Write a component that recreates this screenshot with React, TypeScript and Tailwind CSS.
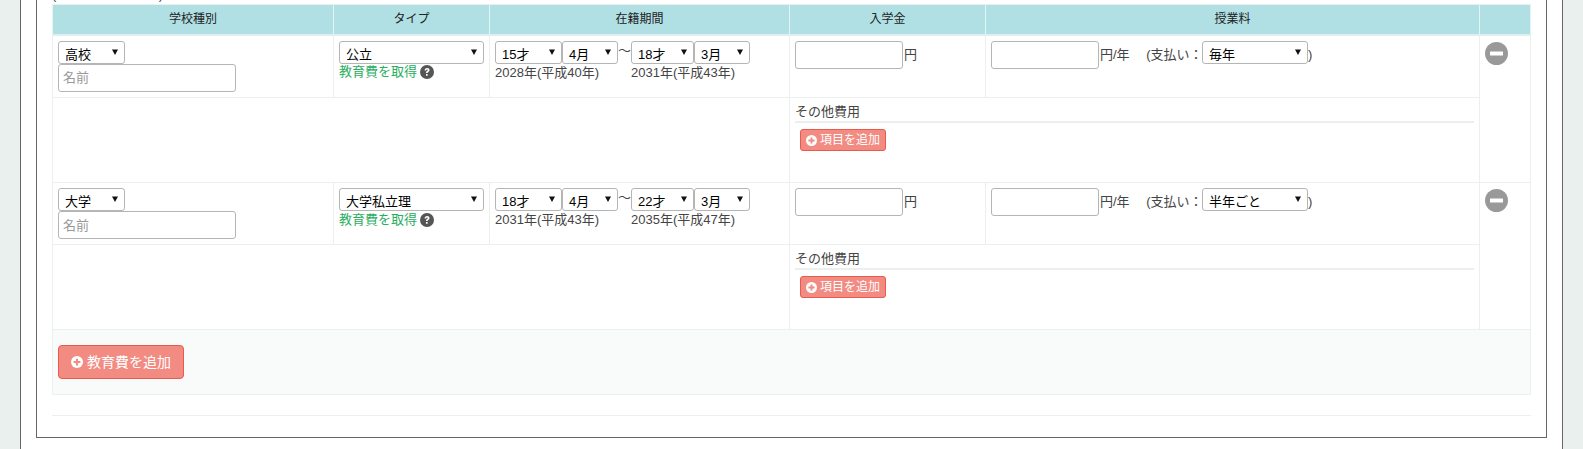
import React from "react";

const font = "font-['Liberation_Sans','Noto_Sans_CJK_JP',sans-serif]";

const Arrow = () => (
  <svg
    viewBox="0 0 6 6"
    className="absolute right-[6px] top-[7px] w-[6px] h-[6px] pointer-events-none"
  >
    <path d="M0 .5h6L3 6z" fill="#111" />
  </svg>
);

const Select = ({ value, w }: { value: string; w: string }) => (
  <div
    className={`relative shrink-0 h-[23px] ${w} bg-white border border-[#b5b5b5] rounded-[3px] text-[13px] text-black pl-[6px] leading-[23px] pt-[1px]`}
  >
    {value}
    <Arrow />
  </div>
);

const PlusIcon = ({ size }: { size: string }) => (
  <svg viewBox="0 0 16 16" className={`${size} shrink-0`}>
    <circle cx="8" cy="8" r="8" fill="#fff" />
    <path d="M3.5 6.6h3.1V3.5h2.8v3.1h3.1v2.8H9.4v3.1H6.6V9.4H3.5z" fill="#f28b82" />
  </svg>
);

const MinusIcon = () => (
  <svg viewBox="0 0 23 23" className="w-[23px] h-[23px]">
    <circle cx="11.5" cy="11.5" r="11.5" fill="#999" />
    <rect x="5" y="9.5" width="13" height="4" rx="0.5" fill="#fff" />
  </svg>
);

const HelpIcon = () => (
  <svg viewBox="0 0 14 14" className="w-[14px] h-[14px] shrink-0">
    <circle cx="7" cy="7" r="7" fill="#555" />
    <path
      d="M4.6 5.4c0-1.5 1-2.4 2.5-2.4s2.4.9 2.4 2.1c0 1-.6 1.5-1.2 1.9-.5.3-.7.5-.7 1H6c0-1 .4-1.5 1-1.9.5-.3.8-.5.8-1 0-.4-.3-.7-.8-.7s-.8.3-.9 1zM6 9h1.6v1.7H6z"
      fill="#fff"
    />
  </svg>
);

type Row = {
  school: string;
  type: string;
  fromAge: string;
  toAge: string;
  fromYear: string;
  toYear: string;
  pay: string;
  height: string;
};

const rows: Row[] = [
  {
    school: "高校",
    type: "公立",
    fromAge: "15才",
    toAge: "18才",
    fromYear: "2028年(平成40年)",
    toYear: "2031年(平成43年)",
    pay: "毎年",
    height: "h-[63px]",
  },
  {
    school: "大学",
    type: "大学私立理",
    fromAge: "18才",
    toAge: "22才",
    fromYear: "2031年(平成43年)",
    toYear: "2035年(平成47年)",
    pay: "半年ごと",
    height: "h-[62px]",
  },
];

const cell = "border border-[#ebf0ee] align-top p-0";
const head =
  "border border-[#ebf0ee] border-x-[#e6f4f5] border-b-[2px] border-b-[#dfeeee] bg-[#b0dfe4] font-normal text-[12px] text-[#222] h-[30px] p-0 pb-[1px]";

const App = () => {
  return (
    <div className={`${font} h-[449px] overflow-hidden bg-[#eaf0ed] px-[20px] text-[13px] text-[#444]`}>
      <div className="h-[449px] bg-white border-x border-x-[#666] px-[15px]">
        <div className="h-[438px] border-x border-b border-[#666] px-[15px]">
          {/* line above the table, cut off by the top of the page */}
          <div className="h-[4px] overflow-hidden">
            <div className="flex justify-between w-[111px] -mt-[13px] leading-[16px]">
              <span>(</span>
              <span>)</span>
            </div>
          </div>
          <table className="w-[1478px] table-fixed border-collapse">
            <colgroup>
              <col className="w-[281px]" />
              <col className="w-[156px]" />
              <col className="w-[300px]" />
              <col className="w-[196px]" />
              <col className="w-[494px]" />
              <col className="w-[51px]" />
            </colgroup>
            <thead>
              <tr>
                <th className={head}>学校種別</th>
                <th className={head}>タイプ</th>
                <th className={head}>在籍期間</th>
                <th className={head}>入学金</th>
                <th className={head}>授業料</th>
                <th className={head}></th>
              </tr>
            </thead>
            <tbody>
              {rows.map((r) => (
                <React.Fragment key={r.school}>
                  <tr className={r.height}>
                    <td className={`${cell} pl-[5px] pt-[5px]`}>
                      <Select value={r.school} w="w-[67px]" />
                      <input
                        placeholder="名前"
                        className="block w-[178px] h-[28px] bg-white border border-[#b5b5b5] rounded-[3px] px-[4px] text-[13px] placeholder:text-[#999]"
                      />
                    </td>
                    <td className={`${cell} pl-[5px] pt-[5px]`}>
                      <Select value={r.type} w="w-[145px]" />
                      <div className="flex items-center gap-[3px] text-[#27ae60] h-[17px]">
                        教育費を取得
                        <HelpIcon />
                      </div>
                    </td>
                    <td className={`${cell} pl-[5px] pt-[5px]`}>
                      <div className="flex">
                        <Select value={r.fromAge} w="w-[67px]" />
                        <Select value="4月" w="w-[56px]" />
                        <span className="w-[13px] text-center leading-[20px]">〜</span>
                        <Select value={r.toAge} w="w-[63px]" />
                        <Select value="3月" w="w-[56px]" />
                      </div>
                      <div className="flex h-[17px] leading-[17px]">
                        <span className="w-[136px]">{r.fromYear}</span>
                        <span>{r.toYear}</span>
                      </div>
                    </td>
                    <td className={`${cell} pl-[5px] pt-[5px]`}>
                      <div className="flex">
                        <input className="w-[108px] h-[28px] bg-white border border-[#b5b5b5] rounded-[3px]" />
                        <span className="leading-[27px] ml-[1px]">円</span>
                      </div>
                    </td>
                    <td className={`${cell} pl-[5px] pt-[5px]`}>
                      <div className="flex">
                        <input className="w-[108px] h-[28px] bg-white border border-[#b5b5b5] rounded-[3px]" />
                        <span className="leading-[27px] ml-[1px] w-[102px] whitespace-pre">円/年　 (支払い：</span>
                        <Select value={r.pay} w="w-[106px]" />
                        <span className="leading-[27px]">)</span>
                      </div>
                    </td>
                    <td className={`${cell} pl-[5px] pt-[6px]`} rowSpan={2}>
                      <MinusIcon />
                    </td>
                  </tr>
                  <tr className="h-[85px]">
                    <td className={cell} colSpan={3}></td>
                    <td className={`${cell} border-r-0 pl-[5px] pt-[5px]`} colSpan={2}>
                      <div className="h-[20px] border-b-[2px] border-b-[#ebf0ee] mr-[5px] leading-[18px]">
                        その他費用
                      </div>
                      <button className="mt-[6px] ml-[5px] flex items-center gap-[3px] h-[22px] px-[5px] bg-[#f28b82] border border-[#e9594c] rounded-[3px] text-white text-[12px]">
                        <PlusIcon size="w-[11px] h-[11px]" />
                        項目を追加
                      </button>
                    </td>
                  </tr>
                </React.Fragment>
              ))}
              <tr className="h-[65px] bg-[#f9fbfa]">
                <td className="border border-[#ebf0ee] p-0 pl-[5px] align-middle" colSpan={6}>
                  <button className="flex items-center gap-[4px] h-[34px] w-[126px] justify-center bg-[#f28b82] border border-[#e9594c] rounded-[4px] text-white text-[14px]">
                    <PlusIcon size="w-[12px] h-[12px]" />
                    教育費を追加
                  </button>
                </td>
              </tr>
            </tbody>
          </table>
          <hr className="mt-[20px] border-t border-t-[#ebf0ee]" />
        </div>
      </div>
    </div>
  );
};

export default App;
